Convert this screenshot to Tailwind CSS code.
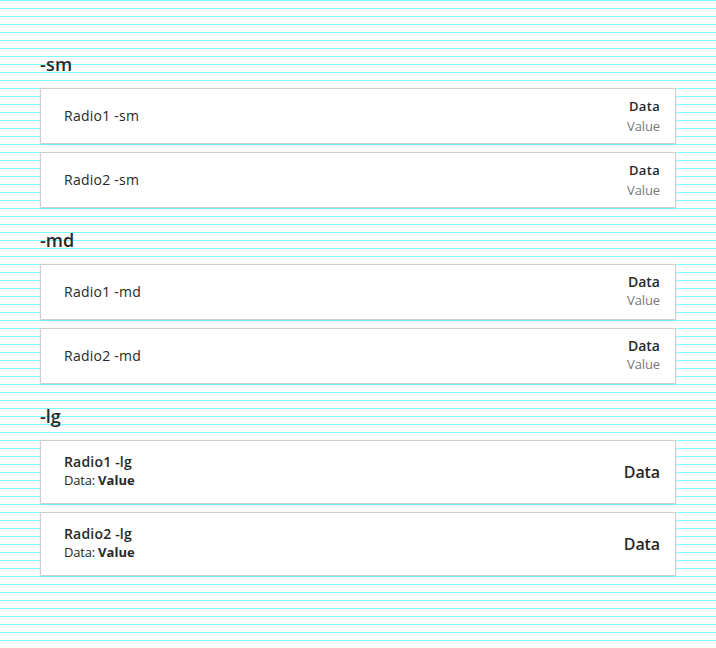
<!DOCTYPE html>
<html lang="en"><head><meta charset="utf-8"><title>Radio cards</title>
<script src="https://cdn.jsdelivr.net/npm/@tailwindcss/browser@4"></script></head>
<body class="bg-white font-['Open_Sans',sans-serif] text-[#282828]">
<main class="h-[648px] px-10 pt-12 bg-[linear-gradient(to_bottom,#7fffff_1px,#fff_1px)] bg-[length:8px_8px]">
<section class="mb-4">
<h2 class="h-8 mb-2 text-lg leading-8 font-semibold tracking-[0.2px]">-sm</h2>
<div class="flex flex-col gap-2">
<div class="flex h-14 items-center justify-between rounded-[1px] border border-[#cdcfd3] bg-white shadow-[0_1px_3px_rgba(0,0,0,0.12)] pl-[23px] pr-[15px]"><span class="text-sm tracking-[0.24px]">Radio1 -sm</span><div class="text-right text-[13px] leading-5"><div class="font-semibold tracking-[0.3px]">Data</div><div class="text-[#777] tracking-[-0.12px]">Value</div></div></div>
<div class="flex h-14 items-center justify-between rounded-[1px] border border-[#cdcfd3] bg-white shadow-[0_1px_3px_rgba(0,0,0,0.12)] pl-[23px] pr-[15px]"><span class="text-sm tracking-[0.24px]">Radio2 -sm</span><div class="text-right text-[13px] leading-5"><div class="font-semibold tracking-[0.3px]">Data</div><div class="text-[#777] tracking-[-0.12px]">Value</div></div></div>
</div></section>
<section class="mb-4">
<h2 class="h-8 mb-2 text-lg leading-8 font-semibold">-md</h2>
<div class="flex flex-col gap-2">
<div class="flex h-14 items-center justify-between rounded-[1px] border border-[#cdcfd3] bg-white shadow-[0_1px_3px_rgba(0,0,0,0.12)] pl-[23px] pr-[15px]"><span class="text-sm tracking-[0.24px]">Radio1 -md</span><div class="pb-1 text-right"><div class="text-sm leading-5 font-semibold">Data</div><div class="text-[13px] leading-4 text-[#777] tracking-[-0.12px]">Value</div></div></div>
<div class="flex h-14 items-center justify-between rounded-[1px] border border-[#cdcfd3] bg-white shadow-[0_1px_3px_rgba(0,0,0,0.12)] pl-[23px] pr-[15px]"><span class="text-sm tracking-[0.24px]">Radio2 -md</span><div class="pb-1 text-right"><div class="text-sm leading-5 font-semibold">Data</div><div class="text-[13px] leading-4 text-[#777] tracking-[-0.12px]">Value</div></div></div>
</div></section>
<section>
<h2 class="h-8 mb-2 text-lg leading-8 font-semibold">-lg</h2>
<div class="flex flex-col gap-2">
<div class="flex h-16 items-center justify-between rounded-[1px] border border-[#cdcfd3] bg-white shadow-[0_1px_3px_rgba(0,0,0,0.12)] pl-[23px] pr-[15px]"><div class="pb-1"><div class="text-sm leading-5 font-semibold tracking-[0.18px]">Radio1 -lg</div><div class="text-[13px] leading-4 tracking-[-0.22px]">Data: <b class="font-bold tracking-[0.05px]">Value</b></div></div><span class="text-base font-semibold tracking-[-0.1px]">Data</span></div>
<div class="flex h-16 items-center justify-between rounded-[1px] border border-[#cdcfd3] bg-white shadow-[0_1px_3px_rgba(0,0,0,0.12)] pl-[23px] pr-[15px]"><div class="pb-1"><div class="text-sm leading-5 font-semibold tracking-[0.18px]">Radio2 -lg</div><div class="text-[13px] leading-4 tracking-[-0.22px]">Data: <b class="font-bold tracking-[0.05px]">Value</b></div></div><span class="text-base font-semibold tracking-[-0.1px]">Data</span></div>
</div></section>
</main></body></html>
